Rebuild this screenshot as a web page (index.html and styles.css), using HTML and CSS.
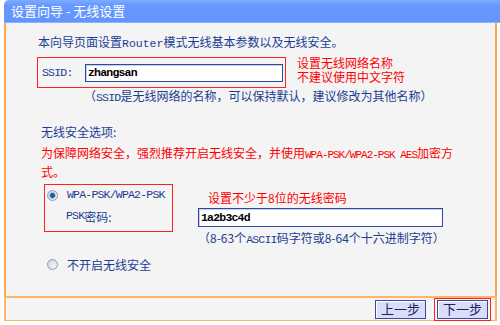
FILE: index.html
```html
<!DOCTYPE html>
<html lang="zh-CN">
<head>
    <meta charset="UTF-8">
    <meta name="viewport" content="width=device-width, initial-scale=1.0">
    <title>设置向导 - 无线设置</title>
    <link rel="stylesheet" href="styles.css">
</head>
<body>
    <div class="wizard">
        <div class="title">设置向导 - 无线设置</div>

        <div class="panel">
            <p class="intro">本向导页面设置<span class="mono">Router</span>模式无线基本参数以及无线安全。</p>

            <div class="ssid-row">
                <div class="ssid-box">
                    <span class="label mono">SSID:</span>
                    <input class="field mono" type="text" value="zhangsan">
                </div>
                <div class="note note-ssid">
                    <div>设置无线网络名称</div>
                    <div>不建议使用中文字符</div>
                </div>
            </div>
            <p class="hint ssid-hint">（<span class="mono">SSID</span>是无线网络的名称，可以保持默认，建议修改为其他名称）</p>

            <p class="section">无线安全选项:</p>
            <p class="warn">为保障网络安全，强烈推荐开启无线安全，并使用<span class="mono tight">WPA-PSK/WPA2-PSK AES</span>加密方<br>式。</p>

            <div class="sec-row">
                <div class="mark sec-box">
                    <div class="opt"><span class="radio on"></span><span class="mono">WPA-PSK/WPA2-PSK</span></div>
                    <div class="opt psk"><span class="mono">PSK</span>密码:</div>
                </div>
                <div class="sec-fields">
                    <div class="note note-pwd">设置不少于8位的无线密码</div>
                    <input class="field mono pwd" type="text" value="1a2b3c4d">
                    <p class="hint">（8-63个<span class="mono">ASCII</span>码字符或8-64个十六进制字符）</p>
                </div>
            </div>

            <div class="opt off-opt"><span class="radio"></span>不开启无线安全</div>
        </div>

        <div class="footer">
            <button class="btn">上一步</button>
            <span class="focus"><button class="btn">下一步</button></span>
        </div>
    </div>
</body>
</html>
```

FILE: styles.css
```css
* {
    margin: 0;
    padding: 0;
    box-sizing: border-box;
}

body {
    background: #fff;
    font-family: "Noto Sans CJK SC", sans-serif;
    font-size: 12px;
    color: #1b3d93;
}

.wizard {
    margin-left: 4px;
    width: 496px;
}

.title {
    height: 23px;
    line-height: 22px;
    padding-left: 7px;
    color: #fff;
    font-size: 13px;
    background: linear-gradient(#7eaaff, #6699ff 25%, #6395fc);
    border-bottom: 1px solid #8ab2ff;
    border-top-left-radius: 5px;
}

.panel {
    width: 493px;
    height: 273px;
    padding: 10px 0 0 32px;
    background: #f4f4f4;
    border-left: 2px solid #ffa54f;
    border-right: 2px solid #ffa54f;
}

.mono {
    font-family: "Liberation Mono", "Noto Sans CJK SC", monospace;
    font-size: 11.5px;
    line-height: 1;
    letter-spacing: -0.8px;
}

.intro {
    line-height: 18px;
}

.intro .mono {
    letter-spacing: 0;
}

.mark {
    border: 1px solid #ff2020;
}

.ssid-row {
    display: flex;
    align-items: flex-start;
    margin-top: 7px;
}

/* red frame drawn as outline, box itself is 247x29 */
.ssid-box {
    display: flex;
    align-items: center;
    width: 247px;
    height: 29px;
    padding-left: 4px;
    outline: 1px solid #ff2020;
}

.label {
    width: 43px;
}

.field {
    height: 18px;
    padding-left: 2px;
    background: #fff;
    border: 1px solid #2e4a9e;
    box-shadow: inset 1px 1px 0 #c7d0ea;
    color: #000;
    font-weight: bold;
    outline: none;
}

.ssid-box .field {
    width: 198px;
}

.note {
    color: #ff0000;
    white-space: nowrap;
}

.note-ssid {
    margin: -2px 0 0 12px;
    line-height: 14px;
}

.hint {
    line-height: 16px;
    white-space: nowrap;
}

.ssid-hint {
    margin: 1px 0 0 46px;
}

.section {
    margin: 20px 0 0 3px;
    line-height: 16px;
}

.warn {
    margin: 3px 0 0 3px;
    line-height: 19px;
    color: #ff0000;
}

.warn .tight {
    font-size: 11px;
    letter-spacing: -1px;
}

.sec-row {
    display: flex;
    align-items: flex-start;
    margin-top: 3px;
}

.sec-box {
    width: 129px;
    height: 48px;
    margin-left: 6px;
    padding-left: 2px;
}

.opt {
    display: flex;
    align-items: center;
    height: 20px;
}

.psk {
    height: 22px;
    padding-left: 19px;
}

.radio {
    width: 11px;
    height: 11px;
    margin-right: 9px;
    border-radius: 50%;
    border: 1px solid #8d9db3;
    background: radial-gradient(circle at 65% 65%, #f6f6f6, #c9ced6);
}

.radio.on {
    background:
        radial-gradient(circle, #1d5f96 0 2px, #4aa0d4 2.6px, transparent 3.4px),
        radial-gradient(circle at 65% 65%, #f6f6f6, #c9ced6);
}

.sec-fields {
    width: 245px;
    margin-left: 25px;
}

.note-pwd {
    margin: 6px 0 0 10px;
    line-height: 16px;
}

.pwd {
    width: 245px;
    height: 19px;
    margin-top: 2px;
}

.sec-fields .hint {
    margin-top: 3px;
}

.off-opt {
    margin: 8px 0 0 9px;
}

.footer {
    display: flex;
    justify-content: flex-end;
    align-items: center;
    gap: 8px;
    width: 493px;
    height: 25px;
    padding-right: 4px;
    background: #f4f4f4;
    border: 2px solid #ffb36b;
    border-bottom-width: 1px;
}

.btn {
    width: 51px;
    height: 19px;
    background: #d9ddf8;
    border: 1px solid #3c4a9c;
    box-shadow: inset 1px 1px 0 #fff;
    color: #1c2266;
    font-family: "Noto Sans CJK SC", sans-serif;
    font-size: 13px;
    line-height: 16px;
}

.focus {
    display: flex;
    padding: 1px 2px;
    border: 1px solid #ff2020;
}
```
